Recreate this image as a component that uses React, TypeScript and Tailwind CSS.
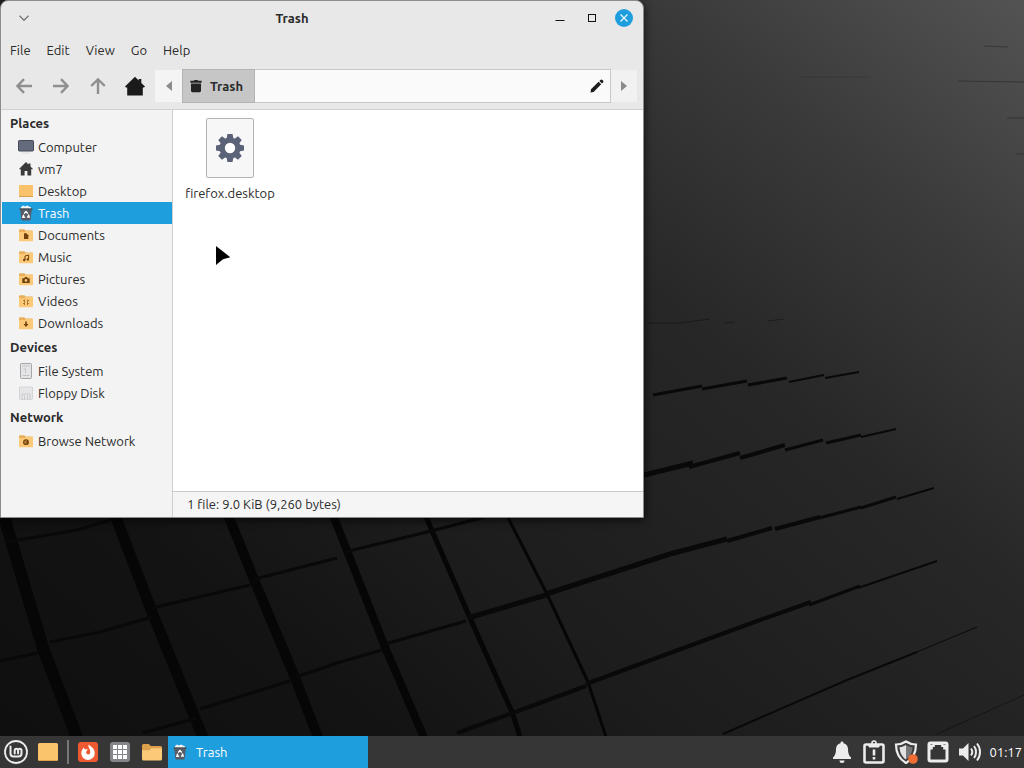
import React from "react";

type IconProps = { className?: string };

function Wallpaper() {
  return (
    <svg
      aria-hidden="true"
      className="absolute inset-0 h-full w-full"
      viewBox="0 0 1024 736"
      preserveAspectRatio="xMidYMid slice"
      fill="none"
    >
      <defs>
        <linearGradient id="sky" gradientUnits="userSpaceOnUse" x1="1024" y1="0" x2="263" y2="948">
          <stop offset="0" stopColor="#525352" />
          <stop offset="0.19" stopColor="#3a3a3a" />
          <stop offset="0.38" stopColor="#272727" />
          <stop offset="0.5" stopColor="#222222" />
          <stop offset="0.65" stopColor="#1c1c1c" />
          <stop offset="0.8" stopColor="#131313" />
          <stop offset="1" stopColor="#0f0f0f" />
        </linearGradient>
      </defs>
      <rect width="1024" height="736" fill="url(#sky)" />
      <g stroke="#060606" strokeLinejoin="round">
        <path strokeWidth="12" d="M2 510L43 648L78 740" />
        <path strokeWidth="11" d="M113 510L152 612L204 740" />
        <path strokeWidth="10" d="M226 510L255 582L296 680L319 740" />
        <path strokeWidth="8" d="M331 510L385 647L425 740" />
        <path strokeWidth="5" d="M423 510L470 618L512 712L521 740" />
        <path strokeWidth="3" d="M504 510L547 594L588 682L607 740" />
      </g>
      <g stroke="#090909" strokeWidth="3">
        <path d="M7 542L77 530L110 520M0 661L38 653M50 642L100 632L152 617M152 608L250 585M255 579L337 558M345 552L427 532L485 517" />
        <path d="M143 733L197 718M200 709L290 681M296 677L335 664M330 665L382 650M385 644L466 621" />
        <path strokeWidth="5" d="M468 618L546 595M546 594L670 554L727 539" />
        <path strokeWidth="4" d="M727 541L772 528M775 529L820 517" />
        <path d="M819 518L861 507M861 508L896 497" />
        <path strokeWidth="2" d="M897 499L934 488" />
        <path strokeWidth="4" d="M457 733L510 714L586 686M586 684L670 653L760 620L811 602" />
        <path d="M809 605L860 586" />
        <path strokeWidth="2" d="M858 588L937 561M723 734L847 680L917 652" />
        <path strokeWidth="1" d="M917 652L977 627" />
        <path strokeWidth="1" opacity="0.5" d="M937 734L1024 695" />
        <path strokeWidth="5" d="M640 476L693 463" />
        <path strokeWidth="4" d="M689 467L740 453M740 458L785 445" />
        <path d="M785 450L823 440M826 443L861 435" />
        <path strokeWidth="2" d="M861 437L896 429" />
        <path d="M653 395L702 386M702 389L747 381M748 385L787 378" />
        <path strokeWidth="2" d="M789 382L824 375M825 378L859 372" />
      </g>
      <g stroke="#161616" strokeWidth="1">
        <path opacity="0.7" d="M649 323L680 323L710 319M724 323L735 322M768 321L784 319" />
        <path opacity="0.4" d="M984 46L1008 47M958 81L1024 82M1007 118L1024 118M1016 154L1024 154" />
        <path opacity="0.2" d="M800 77L870 77" />
      </g>
    </svg>
  );
}

function TrashColor({ className }: IconProps) {
  return (
    <svg viewBox="0 0 16 16" className={className} aria-hidden="true">
      <path d="M3 2.2 5 .6 7 1.400 9 .4l2 1 1.800.8.6 2H2.600z" fill="#f5f5f5" />
      <path d="M1.500 3.300h13l-.3 2.200H1.800z" fill="#4c5057" />
      <path d="M2.400 5.300h11.200l-.9 9a1.500 1.500 0 0 1-1.500 1.300H4.800a1.500 1.500 0 0 1-1.500-1.300z" fill="#575b63" />
      <path
        d="M6.200 8.500 8 6.600l1.800 1.900M10.300 9.600l.8 2.400H9M7.200 12.300H4.900l.8-2.700"
        fill="none"
        stroke="#fff"
        strokeWidth="1.500"
      />
    </svg>
  );
}

function TrashSolid({ className }: IconProps) {
  return (
    <svg viewBox="0 0 16 16" className={className} aria-hidden="true" fill="#222">
      <path d="M1.500 2h4l1-1h3l1 1h4v2.200h-13zM2.300 5.200h11.400v8.300a1.500 1.500 0 0 1-1.500 1.500H3.800a1.500 1.500 0 0 1-1.500-1.500z" />
    </svg>
  );
}

function Monitor({ className }: IconProps) {
  return (
    <svg viewBox="0 0 16 16" className={className} aria-hidden="true">
      <rect x=".5" y="1.500" width="15" height="10.500" rx=".8" fill="#646b7c" stroke="#454a58" />
      <path d="M4 14h8" stroke="#dadada" />
    </svg>
  );
}

function House({ className }: IconProps) {
  return (
    <svg viewBox="0 0 16 16" className={className} aria-hidden="true" fill="#3a3a3a">
      <path d="M8 1 .8 8.300h2V14.500h3.800V10h2.800v4.500h3.800V8.300h2L12.500 5.400V2.500h-2v1z" />
    </svg>
  );
}

function DesktopTile({ className }: IconProps) {
  return (
    <svg viewBox="0 0 16 16" className={className} aria-hidden="true">
      <rect x="1" y="2" width="14" height="12" rx=".8" fill="#fac36b" />
      <path d="M1 13.500h14" stroke="#d9a04e" />
    </svg>
  );
}

function Folder({ className, children }: IconProps & { children?: React.ReactNode }) {
  return (
    <svg viewBox="0 0 16 16" className={className} aria-hidden="true">
      <path d="M1 3.200a1 1 0 0 1 1-1h4.300l1.400 1.300H14a1 1 0 0 1 1 1V6H1z" fill="#e9b05c" />
      <path d="M1 5h5.800l1-.9H15v9.200a.9.9 0 0 1-.9.9H1.900a.9.9 0 0 1-.9-.9z" fill="#fbc977" />
      {children}
    </svg>
  );
}

function Drive({ className }: IconProps) {
  return (
    <svg viewBox="0 0 16 16" className={className} aria-hidden="true">
      <rect x="2.500" y=".5" width="11" height="15" rx=".8" fill="#e4e4e6" stroke="#a6a6aa" />
      <path d="M4.500 3h7M4.500 12.500h7" stroke="#c2c2c6" />
      <path d="M5.500 6h2v4" stroke="#c2c2c6" fill="none" />
    </svg>
  );
}

function Floppy({ className }: IconProps) {
  return (
    <svg viewBox="0 0 16 16" className={className} aria-hidden="true">
      <rect x="1.500" y="2" width="13" height="12.500" rx=".8" fill="#e6e6e8" stroke="#d4d4d7" />
      <path d="M4 14V9h8v5M6.500 10.500v3.500M9.500 10.500v3.500" stroke="#cbcbcf" fill="none" />
    </svg>
  );
}

const emblem = "#70400f";

type Place = { label: string; icon: React.ReactNode; selected?: boolean };
type Group = { title: string; places: Place[] };

const groups: Group[] = [
  {
    title: "Places",
    places: [
      { label: "Computer", icon: <Monitor className="size-4" /> },
      { label: "vm7", icon: <House className="size-4" /> },
      { label: "Desktop", icon: <DesktopTile className="size-4" /> },
      { label: "Trash", icon: <TrashColor className="size-4" />, selected: true },
      {
        label: "Documents",
        icon: (
          <Folder className="size-4">
            <path d="M6 6.200h2.300l2 2V12H6z" fill={emblem} />
          </Folder>
        ),
      },
      {
        label: "Music",
        icon: (
          <Folder className="size-4">
            <path d="M7 11V7l3.600-.9v4.200" stroke={emblem} fill="none" />
            <circle cx="6.200" cy="11" r="1.200" fill={emblem} />
            <circle cx="9.800" cy="10.400" r="1.200" fill={emblem} />
          </Folder>
        ),
      },
      {
        label: "Pictures",
        icon: (
          <Folder className="size-4">
            <path d="M4.300 7.200h2l.7-1.100h2l.7 1.100h2v4.800H4.300z" fill={emblem} />
            <circle cx="8" cy="9.400" r="1.300" fill="#fbc977" />
          </Folder>
        ),
      },
      {
        label: "Videos",
        icon: (
          <Folder className="size-4">
            <path d="M6.500 6.500v5.500M9.500 6.500v5.500M5 7.500h2M5 10.500h2M9 7.500h2M9 10.500h2" stroke="#b07a33" />
          </Folder>
        ),
      },
      {
        label: "Downloads",
        icon: (
          <Folder className="size-4">
            <path d="M7.200 6.400h1.600v2.700h1.700L8 12 5.500 9.100h1.700z" fill={emblem} />
          </Folder>
        ),
      },
    ],
  },
  {
    title: "Devices",
    places: [
      { label: "File System", icon: <Drive className="size-4" /> },
      { label: "Floppy Disk", icon: <Floppy className="size-4" /> },
    ],
  },
  {
    title: "Network",
    places: [
      {
        label: "Browse Network",
        icon: (
          <Folder className="size-4">
            <circle cx="8" cy="9.200" r="2.900" fill={emblem} />
            <path d="M8 7.200v4M6.900 8v2.400" stroke="#e3a44d" strokeWidth=".8" />
          </Folder>
        ),
      },
    ],
  },
];

const menus = ["File", "Edit", "View", "Go", "Help"];

function TitleBar() {
  return (
    <header className="flex h-[34px] items-center pr-[3px] pl-[7px]">
      <button type="button" aria-label="Window menu" className="flex size-8 items-center justify-center">
        <svg viewBox="0 0 12 12" className="size-3" fill="none" stroke="#777" strokeWidth="1.300" aria-hidden="true">
          <path d="M1.500 3.800 6 8.300l4.500-4.500" />
        </svg>
      </button>
      <h1 className="flex-1 text-center font-bold">Trash</h1>
      <button type="button" aria-label="Minimize" className="flex size-8 items-center justify-center">
        <svg viewBox="0 0 12 12" className="size-3" aria-hidden="true">
          <path d="M1.500 8.500h9" stroke="#111" />
        </svg>
      </button>
      <button type="button" aria-label="Maximize" className="flex size-8 items-center justify-center">
        <svg viewBox="0 0 12 12" className="size-3" aria-hidden="true">
          <rect x="2.500" y="2.500" width="7" height="7" fill="none" stroke="#111" />
        </svg>
      </button>
      <button type="button" aria-label="Close" className="flex size-8 items-center justify-center">
        <svg viewBox="0 0 18 18" className="size-[18px]" aria-hidden="true">
          <circle cx="9" cy="9" r="9" fill="#1f9ede" />
          <path d="m5.500 5.500 7 7m0-7-7 7" stroke="#e6f5ff" strokeWidth="1.300" />
        </svg>
      </button>
    </header>
  );
}

function NavButton({ label, d }: { label: string; d: string }) {
  return (
    <button type="button" aria-label={label} className="flex h-[34px] w-[37px] items-center justify-center">
      <svg viewBox="0 0 16 16" className="size-4" fill="none" stroke="#8f8f8f" strokeWidth="2.400" aria-hidden="true">
        <path d={d} />
      </svg>
    </button>
  );
}

function Toolbar() {
  return (
    <div className="flex border-b border-[#d0d0d0] pt-[5px] pr-1.5 pb-1.5 pl-1">
      <NavButton label="Back" d="M16 8H1.500M8 1.200 1.400 8 8 14.800" />
      <NavButton label="Forward" d="M0 8h14.500M8 1.200 14.600 8 8 14.800" />
      <NavButton label="Up" d="M8 16V1.500M1.200 8 8 1.400 14.800 8" />
      <button type="button" aria-label="Home" className="mr-px flex h-[34px] w-[38px] items-center justify-center">
        <svg viewBox="0 0 20 20" className="size-5" fill="#1a1a1a" aria-hidden="true">
          <path d="M10 .8 0 10.500l1 1h1.200V19.500h15.600v-8H19l1-1-3.700-3.600V3h-2.600v1.400z" />
        </svg>
      </button>
      <div className="flex h-[34px] flex-1">
        <button type="button" aria-label="Scroll path left" className="my-px flex w-[27px] items-center justify-center bg-[#f4f4f4]">
          <svg viewBox="0 0 6 10" className="h-2.5 w-1.5" fill="#8a8a8a" aria-hidden="true">
            <path d="M6 0v10L0 5z" />
          </svg>
        </button>
        <button type="button" className="flex w-[73px] items-center gap-[7px] border border-[#b4b4b4] bg-[#c6c6c6] pl-1.5 font-bold">
          <TrashSolid className="size-[14px]" />
          Trash
        </button>
        <div className="flex flex-1 items-center justify-end border-y border-r border-[#c8c8c8] bg-[#fafafa]">
          <button type="button" aria-label="Edit location" className="px-[5px]">
            <svg viewBox="0 0 16 16" className="size-4" fill="#1c1c1c" aria-hidden="true">
              <path d="M1.500 14.500 2 11.300 9.600 3.700l2.600 2.600-7.600 7.600zM10.400 2.900l1-1a1.400 1.400 0 0 1 2 0l.6.6a1.400 1.400 0 0 1 0 2L13 5.500z" />
            </svg>
          </button>
        </div>
        <button type="button" aria-label="Scroll path right" className="my-px flex w-[26px] items-center justify-center bg-[#f1f1f1]">
          <svg viewBox="0 0 6 10" className="h-2.5 w-1.5" fill="#8a8a8a" aria-hidden="true">
            <path d="M0 0v10l6-5z" />
          </svg>
        </button>
      </div>
    </div>
  );
}

function Sidebar() {
  return (
    <nav aria-label="Places" className="w-[172px] shrink-0 border-r border-[#cfcfcf] bg-[#f3f3f3] pl-px">
      {groups.map((group) => (
        <section key={group.title}>
          <h2 className="flex h-[26px] items-center pl-2 font-bold">{group.title}</h2>
          <ul>
            {group.places.map((place) => (
              <li key={place.label}>
                <a
                  href="#"
                  aria-current={place.selected ? "page" : undefined}
                  className={
                    place.selected
                      ? "flex h-[22px] items-center gap-1 bg-[#1f9ede] pl-4 text-white"
                      : "flex h-[22px] items-center gap-1 pl-4"
                  }
                >
                  {place.icon}
                  {place.label}
                </a>
              </li>
            ))}
          </ul>
        </section>
      ))}
    </nav>
  );
}

function GearFile() {
  return (
    <svg viewBox="0 0 48 60" className="h-[60px] w-12" aria-hidden="true">
      <rect x=".5" y=".5" width="47" height="59" rx="1.500" fill="#f7f7f8" stroke="#b4b4b8" />
      <g transform="translate(24 30)" fill="#5c6378">
        {[0, 45, 90, 135].map((angle) => (
          <path key={angle} transform={`rotate(${angle})`} d="M-3.500-9-2.600-14h5.200L3.500-9V9L2.600 14h-5.200L-3.500 9z" />
        ))}
        <circle r="10.500" />
        <circle r="5.200" fill="#fff" />
      </g>
    </svg>
  );
}

function FileWindow() {
  return (
    <main className="absolute top-0 left-0 flex w-[644px] max-w-full flex-col overflow-hidden rounded-t-lg border border-[#8c8c8c] bg-[#e8e8e8] text-[#2b2b2b] shadow-[0_2px_10px_rgba(0,0,0,0.7)]">
      <TitleBar />
      <div className="flex h-[29px] items-center gap-4 px-[9px]" role="menubar">
        {menus.map((menu) => (
          <button key={menu} type="button" role="menuitem">
            {menu}
          </button>
        ))}
      </div>
      <Toolbar />
      <div className="flex">
        <Sidebar />
        <div className="flex min-w-0 flex-1 flex-col">
          <div className="min-h-[381px] flex-1 bg-white px-1 pt-2">
            <button type="button" className="flex w-[106px] flex-col items-center gap-1.5">
              <GearFile />
              firefox.desktop
            </button>
          </div>
          <footer className="border-t border-[#c9c9c9] bg-[#f5f5f5] px-[14px] pt-[3px] pb-1">
            1 file: 9.0 KiB (9,260 bytes)
          </footer>
        </div>
      </div>
    </main>
  );
}

function Taskbar() {
  const launcher = "flex size-8 items-center justify-center";
  return (
    <footer className="relative flex h-8 items-center justify-between bg-[#373637] text-white">
      <div className="flex items-center">
        <button type="button" aria-label="Menu" className={launcher}>
          <svg viewBox="0 0 24 24" className="size-6" fill="none" stroke="#ececec" aria-hidden="true">
            <circle cx="12" cy="12" r="11" strokeWidth="1.800" />
            <path
              d="M6.500 6.500v7a3 3 0 0 0 3 3h5a3 3 0 0 0 3-3v-3a1.700 1.700 0 0 0-3.400 0v3M14.100 11v-.5a1.700 1.700 0 0 0-3.400 0v3"
              strokeWidth="2"
              strokeLinecap="round"
            />
          </svg>
        </button>
        <button type="button" aria-label="Show desktop" className={launcher}>
          <svg viewBox="0 0 20 18" className="h-[18px] w-5" aria-hidden="true">
            <rect width="20" height="18" rx="1.500" fill="#fac46c" />
            <path d="M1 17.500h18" stroke="#dca24f" />
          </svg>
        </button>
        <span className="mx-[3px] h-6 w-0.5 bg-[#777]" />
        <button type="button" aria-label="Firefox" className={launcher}>
          <svg viewBox="0 0 20 20" className="size-5" aria-hidden="true">
            <rect width="20" height="20" rx="3" fill="#ed5a32" />
            <path
              d="M3.300 11.500c0-2.700 1.200-4.900 2.700-6 .1 1 .5 1.600 1.100 2 1-.5 2-.5 3 0-1.200.3-1.700 1.400-1.200 2.300.5.900 1.700 1 2.600.5 1-.7 1-2-.1-3.400C10.700 5.500 10 4.200 10.700 2.500c.8 1 1.900 1.500 3 2.400 2 1.600 3 3.700 3 6a6.700 6.700 0 0 1-13.400.6z"
              fill="#fff"
            />
            <circle cx="10.200" cy="10.600" r="2" fill="#ed5a32" />
          </svg>
        </button>
        <button type="button" aria-label="Applications" className={launcher}>
          <svg viewBox="0 0 20 20" className="size-5" aria-hidden="true">
            <rect width="20" height="20" rx="3" fill="#85858a" />
            <path d="M3 5h14M3 10h14M3 15h14" stroke="#fff" strokeWidth="4" strokeDasharray="4 1" />
          </svg>
        </button>
        <button type="button" aria-label="Files" className={launcher}>
          <svg viewBox="0 0 20 20" className="size-5" aria-hidden="true">
            <path d="M0 3.500A1.500 1.500 0 0 1 1.500 2h5.300l2 2h9.700A1.500 1.500 0 0 1 20 5.500V9H0z" fill="#dca04d" />
            <path d="M0 8.200h7.500l2-2H20V17a1.500 1.500 0 0 1-1.500 1.500h-17A1.500 1.500 0 0 1 0 17z" fill="#fbc977" />
          </svg>
        </button>
        <button type="button" className="flex h-8 w-[200px] items-center gap-2 bg-[#1f9ede] pl-1">
          <TrashColor className="size-4" />
          Trash
        </button>
      </div>
      <div className="flex items-center pr-0.5">
        <button type="button" aria-label="Notifications" className={launcher}>
          <svg viewBox="0 0 20 22" className="h-[22px] w-5" fill="#ececec" aria-hidden="true">
            <path d="M10 .5c1 0 1.500.7 1.500 1.700 2.800.7 4.500 3 4.500 5.800 0 4 .8 6.500 3 8.500v1.500H1v-1.500c2.200-2 3-4.500 3-8.500 0-2.800 1.700-5.100 4.500-5.800 0-1 .5-1.700 1.500-1.700zM7.500 19.500h5a2.500 2.500 0 0 1-5 0z" />
          </svg>
        </button>
        <button type="button" aria-label="System reports" className={launcher}>
          <svg viewBox="0 0 22 24" className="h-6 w-[22px]" fill="none" stroke="#ececec" aria-hidden="true">
            <rect x="1.500" y="4.500" width="19" height="18" rx="1.500" strokeWidth="2.600" />
            <path d="M6 4.500v2.500h10V4.500" fill="#ececec" />
            <circle cx="11" cy="3" r="2" strokeWidth="1.600" />
            <path d="M11 9.500v6M11 17v2.500" strokeWidth="2.600" />
          </svg>
        </button>
        <button type="button" aria-label="Update manager" className={launcher}>
          <svg viewBox="0 0 24 24" className="size-6" aria-hidden="true">
            <path
              d="M12 1.500c3 2 6 3 10 3 0 9-3 14.500-10 18.500C5 19 2 13.500 2 4.500c4 0 7-1 10-3z"
              fill="#3b3b3b"
              stroke="#ececec"
              strokeWidth="2.200"
            />
            <path d="M12 5c2 1.300 4 2 6.500 2.200C18 13 16 16.500 12 19.500z" fill="#777" />
            <path d="M12 5C10 6.300 8 7 5.500 7.200 6 13 8 16.500 12 19.500z" fill="#e2e2e2" />
            <circle cx="19" cy="19" r="4.800" fill="#ef6c33" />
          </svg>
        </button>
        <button type="button" aria-label="Network" className={launcher}>
          <svg viewBox="0 0 22 22" className="size-[22px]" aria-hidden="true">
            <rect x=".5" y=".5" width="21" height="21" rx="3" fill="#ececec" />
            <path d="M3.500 18.500V8.500h2.300V6h2V4h6.400v2h2v2.500h2.300v10z" fill="#373637" />
            <path d="M3.500 3.500h2M16.500 3.500h2" stroke="#8b8b8b" />
          </svg>
        </button>
        <button type="button" aria-label="Volume" className={launcher}>
          <svg viewBox="0 0 24 22" className="h-[22px] w-6" aria-hidden="true">
            <path d="M1 7.500h4L10.500 2v18L5 14.500H1z" fill="#ececec" />
            <path
              d="M13 7.500c1.500 2 1.500 5 0 7M16 5c2.700 3.500 2.700 8.500 0 12M19 2.500c4 5 4 12 0 17"
              fill="none"
              stroke="#ececec"
              strokeWidth="2"
            />
          </svg>
        </button>
        <time className="ml-[3px]">01:17</time>
      </div>
    </footer>
  );
}

export default function App() {
  return (
    <div className="flex min-h-screen flex-col overflow-hidden bg-[#0e0e0e] font-['Ubuntu','Noto_Sans',sans-serif] text-[13px] leading-[18px]">
      <div className="relative min-h-[540px] flex-1 overflow-hidden">
        <Wallpaper />
        <FileWindow />
        <svg
          viewBox="0 0 16 20"
          className="pointer-events-none absolute top-[245px] left-[215px] h-5 w-4"
          fill="#000"
          aria-hidden="true"
        >
          <path d="M1 1 15.300 12.200 8 14.300 1 20z" />
        </svg>
      </div>
      <Taskbar />
    </div>
  );
}
